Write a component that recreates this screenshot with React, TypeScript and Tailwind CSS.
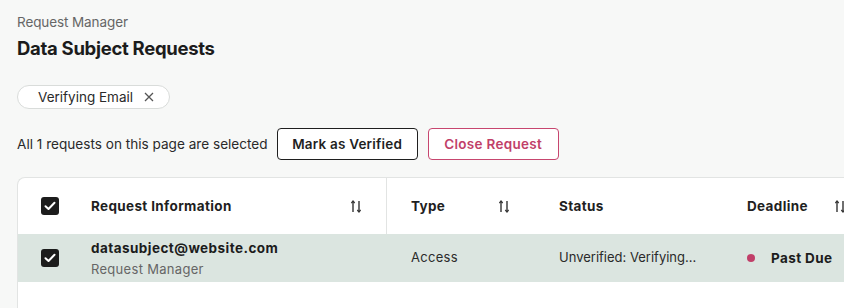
import React from "react";

function SortIcon() {
  return (
    <svg width="10" height="13" viewBox="0 0 10 13" fill="none" className="shrink-0">
      <path d="M2 12V1.5" stroke="#333" strokeWidth="1.4" />
      <path d="M0.3 3L2 1L3.7 3" stroke="#333" strokeWidth="1.2" fill="none" />
      <path d="M8 1V11.5" stroke="#333" strokeWidth="1.4" />
      <path d="M6.3 10L8 12L9.7 10" stroke="#333" strokeWidth="1.2" fill="none" />
    </svg>
  );
}

function Check() {
  return (
    <div className="w-[18px] h-[18px] rounded-[3px] bg-[#1c1c1c] flex items-center justify-center">
      <svg width="12" height="10" viewBox="0 0 12 10" fill="none">
        <path d="M1.5 5.2L4.5 8L10.5 1.8" stroke="white" strokeWidth="2" strokeLinecap="round" strokeLinejoin="round" />
      </svg>
    </div>
  );
}

export default function App() {
  return (
    <div
      className="w-[844px] h-[308px] overflow-hidden bg-[#f7f8f7] text-[#1f1f1f] pl-[17px]"
      style={{ fontFamily: "Inter, 'Noto Sans', sans-serif" }}
    >
      <div className="pt-[12px] text-[13.5px] text-[#666] tracking-[-0.1px]">Request Manager</div>
      <div className="mt-[3px] text-[18.5px] font-bold tracking-[-0.3px] text-[#1c1c1c]">Data Subject Requests</div>

      <div className="mt-[22px] inline-flex items-center h-[24px] rounded-full border border-[#d9dcda] bg-white pl-[20px] pr-[15px] text-[13.5px] text-[#2a2a2a] tracking-[0px]">
        <span>Verifying Email</span>
        <svg width="10" height="10" viewBox="0 0 10 10" className="ml-[11px]">
          <path d="M1 1L9 9M9 1L1 9" stroke="#555" strokeWidth="1.3" />
        </svg>
      </div>

      <div className="mt-[19px] flex items-center h-[32px]">
        <span className="text-[13.6px] text-[#2a2a2a] tracking-[0px]">All 1 requests on this page are selected</span>
        <button className="ml-[9px] h-[32px] w-[141px] rounded-[4px] border border-[#1f1f1f] bg-white text-[13.5px] font-semibold tracking-[0.2px]">
          Mark as Verified
        </button>
        <button className="ml-[10px] h-[32px] w-[131px] rounded-[4px] border border-[#c7466f] bg-white text-[13.5px] font-semibold text-[#c13f69] tracking-[0.3px]">
          Close Request
        </button>
      </div>

      <div className="mt-[17px] bg-white border-t border-l border-[#e2e4e3] rounded-tl-[8px] h-[200px]">
        <div className="grid grid-cols-[56px_313px_148px_188px_1fr] h-[56px] text-[13.5px] font-bold tracking-[0.35px] text-[#1f1f1f]">
          <div className="flex items-center pl-[23px]"><Check /></div>
          <div className="flex items-center justify-between pl-[17px] pr-[25px] border-r border-[#e2e4e3]">
            <span>Request Information</span>
            <SortIcon />
          </div>
          <div className="flex items-center justify-between pl-[24px] pr-[26px]">
            <span>Type</span>
            <SortIcon />
          </div>
          <div className="flex items-center pl-[24px]">
            <span>Status</span>
          </div>
          <div className="flex items-center pl-[24px]">
            <span>Deadline</span>
            <span className="ml-[27px]"><SortIcon /></span>
          </div>
        </div>
        <div className="grid grid-cols-[56px_313px_148px_188px_1fr] h-[48px] bg-[#dbe5e0] text-[13px] text-[#2a2a2a] tracking-[0px]">
          <div className="flex items-center pl-[23px]"><Check /></div>
          <div className="flex flex-col justify-center pl-[17px]">
            <span className="font-bold text-[#1c1c1c] leading-[18px] text-[13.5px] tracking-[0.45px]">datasubject@website.com</span>
            <span className="text-[#666] leading-[18px] mt-[3px] tracking-[0.3px]">Request Manager</span>
          </div>
          <div className="flex items-center pl-[24px] tracking-[0.3px]">Access</div>
          <div className="flex items-center pl-[24px]">Unverified: Verifying...</div>
          <div className="flex items-center pl-[24px]">
            <span className="w-[8px] h-[8px] rounded-full bg-[#c13f69]" />
            <span className="ml-[16px] font-bold text-[#1c1c1c] text-[13.5px] tracking-[0.4px]">Past Due</span>
          </div>
        </div>
      </div>
    </div>
  );
}
